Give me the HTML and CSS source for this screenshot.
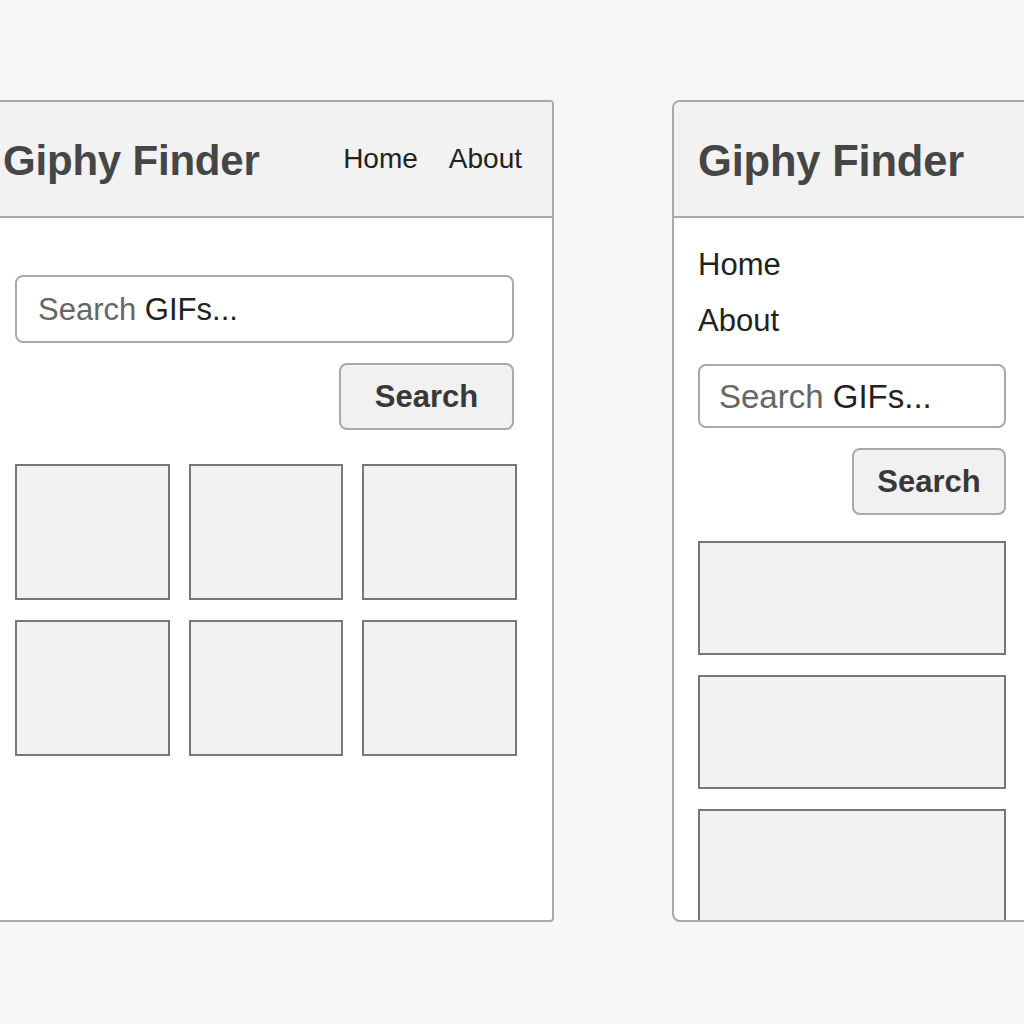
FILE: index.html
```html
<!DOCTYPE html>
<html lang="en">
<head>
<meta charset="utf-8">
<title>Giphy Finder</title>
<link rel="stylesheet" href="styles.css">
</head>
<body>
<div class="stage">
  <section class="panel panel-wide">
    <header class="bar">
      <h1 class="title">Giphy Finder</h1>
      <nav class="nav-inline">
        <a href="#">Home</a>
        <a href="#">About</a>
      </nav>
    </header>
    <main class="body body-wide">
      <div class="field field-wide"><span class="ph"><span class="ph-light">Search</span> <span class="ph-dark">GIFs...</span></span></div>
      <div class="actions"><button class="btn btn-wide">Search</button></div>
      <div class="grid">
        <div class="tile"></div>
        <div class="tile"></div>
        <div class="tile"></div>
        <div class="tile"></div>
        <div class="tile"></div>
        <div class="tile"></div>
      </div>
    </main>
  </section>

  <section class="panel panel-narrow">
    <header class="bar bar-narrow">
      <h1 class="title title-narrow">Giphy Finder</h1>
    </header>
    <main class="body body-narrow">
      <nav class="nav-stack">
        <a href="#">Home</a>
        <a href="#">About</a>
      </nav>
      <div class="field field-narrow"><span class="ph"><span class="ph-light">Search</span> <span class="ph-dark">GIFs...</span></span></div>
      <div class="actions"><button class="btn btn-narrow">Search</button></div>
      <div class="list">
        <div class="tile tile-row"></div>
        <div class="tile tile-row"></div>
        <div class="tile tile-row"></div>
      </div>
    </main>
  </section>
</div>
</body>
</html>
```

FILE: styles.css
```css
html, body {
  margin: 0;
  padding: 0;
  background: #f7f7f7;
  overflow: hidden;
  width: 1024px;
  height: 1024px;
  font-family: "Liberation Sans", Arial, sans-serif;
}

.stage {
  display: flex;
  align-items: flex-start;
  padding-top: 100px;
  margin-left: -2px;
}

.panel {
  box-sizing: border-box;
  height: 822px;
  background: #ffffff;
  border: 2px solid #a9a9a9;
  overflow: hidden;
  flex: none;
}

.panel-wide {
  width: 556px;
  border-radius: 0 4px 4px 0;
}

.panel-narrow {
  width: 360px;
  margin-left: 118px;
  border-radius: 8px 0 0 8px;
}

.bar {
  height: 114px;
  background: #f2f2f2;
  border-bottom: 2px solid #a9a9a9;
  display: flex;
  align-items: center;
  justify-content: space-between;
  padding: 0 30px 0 3px;
}

.bar-narrow {
  padding: 0 0 0 24px;
  justify-content: flex-start;
}

.title {
  margin: 0;
  font-size: 42px;
  font-weight: bold;
  color: #464646;
  letter-spacing: -0.2px;
  position: relative;
  top: 2px;
}

.title-narrow {
  font-size: 43.5px;
}

.nav-inline {
  display: flex;
  gap: 31px;
}

.nav-inline a,
.nav-stack a {
  color: #222;
  text-decoration: none;
  font-size: 28px;
}

.body {
  box-sizing: border-box;
}

.body-wide {
  padding: 57px 35px 0 15px;
}

.body-narrow {
  padding: 19px 24px 0 24px;
}

.nav-stack {
  display: flex;
  flex-direction: column;
  margin-bottom: 15px;
}

.nav-stack a {
  font-size: 31px;
  line-height: 56px;
}

.field {
  box-sizing: border-box;
  border: 2px solid #a9a9a9;
  border-radius: 8px;
  background: #fff;
  display: flex;
  align-items: center;
}

.ph {
  white-space: pre;
  position: relative;
  top: 1px;
}

.field-wide {
  height: 68px;
  padding-left: 21px;
  font-size: 31px;
  width: 499px;
}

.field-narrow {
  height: 64px;
  padding-left: 19px;
  font-size: 33px;
}

.ph-light {
  color: #666;
}

.ph-dark {
  color: #222;
}

.actions {
  display: flex;
  justify-content: flex-end;
  margin-top: 20px;
}

.btn {
  box-sizing: border-box;
  height: 67px;
  border: 2px solid #a9a9a9;
  border-radius: 8px;
  background: #f1f1f1;
  color: #383838;
  font-family: "Liberation Sans", Arial, sans-serif;
  font-weight: bold;
  font-size: 31px;
  padding: 0;
}

.btn-wide {
  width: 175px;
  margin-right: 3px;
}

.btn-narrow {
  width: 154px;
}

.grid {
  margin-top: 34px;
  display: grid;
  grid-template-columns: repeat(3, 1fr);
  column-gap: 19px;
  row-gap: 20px;
}

.tile {
  box-sizing: border-box;
  height: 136px;
  border: 2px solid #777;
  background: #f2f2f2;
}

.list {
  margin-top: 26px;
  display: flex;
  flex-direction: column;
  gap: 20px;
}

.tile-row {
  height: 114px;
}
```
